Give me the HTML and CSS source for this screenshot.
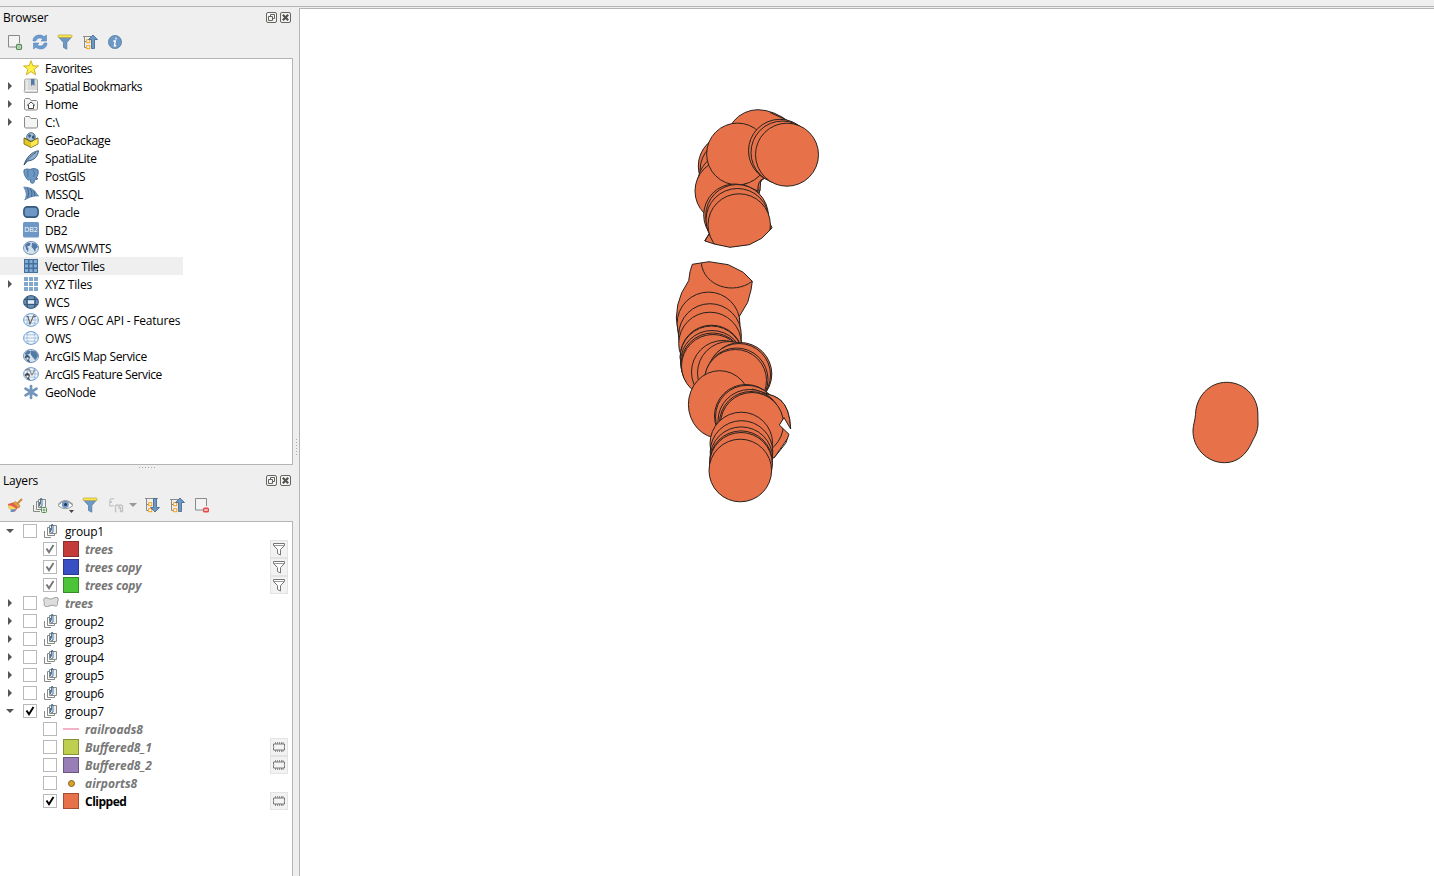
FILE: index.html
```html
<!DOCTYPE html>
<html lang="en">
<head>
<meta charset="utf-8">
<title>Map project</title>
<link rel="stylesheet" href="styles.css">
</head>
<body>
<svg class="defs" aria-hidden="true">
  <symbol id="float" viewBox="0 0 11 11"><rect x=".5" y=".5" width="10" height="10" rx="1.500" fill="#f4f4f4" stroke="#66645f"/><path d="M4.500 4V2.500h4v4H7M2.500 4.500h4v4h-4z" fill="none" stroke="#66645f"/></symbol>
  <symbol id="close" viewBox="0 0 11 11"><rect x=".5" y=".5" width="10" height="10" rx="1.500" fill="#f4f4f4" stroke="#66645f"/><path d="M2.800 2.800l5.400 5.400M8.200 2.800L2.800 8.200" stroke="#55534f" stroke-width="2.200"/></symbol>
  <symbol id="add" viewBox="0 0 16 16"><path d="M10 13H1.500V1.500h11V9" fill="#f3f3f3" stroke="#888a85"/><rect x="9.500" y="10.500" width="5" height="5" rx="1.500" fill="#e6f4e6" stroke="#5a8c5a" stroke-width="1.300"/><path d="M12 11.500v3M10.500 13h3" stroke="#8fb98f"/></symbol>
  <symbol id="refresh" viewBox="0 0 16 16"><path d="M1 7C1 3 4 1 7.500 1c2 0 3.500.7 4.500 1.700L14.500 1v6H9l1.700-1.900C8.500 3.300 5 3.500 3.800 7zM15 9c0 4-3 6-6.500 6-2 0-3.500-.7-4.500-1.700L1.500 15V9H7l-1.700 1.900c2.200 1.800 5.700 1.600 6.900-1.900z" fill="#6b9bd0" stroke="#4d7cb0" stroke-width=".5"/></symbol>
  <symbol id="filter" viewBox="0 0 16 16"><path d="M1.500 3h13L9.800 8.500v6.700L6.500 13.500v-5z" fill="#6d97c4" stroke="#587fa8" stroke-width=".8"/><rect x="1" y="1" width="14" height="2.500" rx="1" fill="#fce94f" stroke="#b5a33c" stroke-width=".7"/></symbol>
  <symbol id="collapse" viewBox="0 0 16 16"><path d="M1 2.500h8M2.500 2v11.500H5M2.500 7.500H5" fill="none" stroke="#888a85"/><rect x="4.700" y="5.700" width="3" height="3" fill="#fff" stroke="#f5a01c"/><rect x="4.700" y="11.700" width="3" height="3" fill="#fff" stroke="#f5a01c"/><path d="M11 1l4.500 4.500h-3v9h-3v-9h-3z" fill="#6d97c4" stroke="#3e648c" stroke-width=".8"/></symbol>
  <symbol id="expand" viewBox="0 0 16 16"><path d="M1 1.500h13M2.500 2v11.500H5M2.500 7.500H5" fill="none" stroke="#888a85"/><rect x="4.700" y="5.700" width="3" height="3" fill="#fff" stroke="#f5a01c"/><rect x="4.700" y="11.700" width="3" height="3" fill="#fff" stroke="#f5a01c"/><path d="M11 15l4.500-4.500h-3v-9h-3v9h-3z" fill="#6d97c4" stroke="#3e648c" stroke-width=".8"/></symbol>
  <symbol id="info" viewBox="0 0 16 16"><circle cx="8" cy="8" r="6.600" fill="#6d97c4" stroke="#527aa5" stroke-width=".7"/><path d="M9.200 3.600l-.3 1.700M6.300 7h2l-.9 4.700h1.800" fill="none" stroke="#fff" stroke-width="1.400"/></symbol>
  <symbol id="star" viewBox="0 0 16 16"><path d="M8 .7l1.900 5.100 5.600.1-4.400 3.400 1.600 5.500L8 11.600l-4.700 3.200 1.600-5.500L.5 5.900l5.600-.1z" fill="#fdf14c" stroke="#c4a000" stroke-width=".8"/></symbol>
  <symbol id="bookmark" viewBox="0 0 16 16"><path d="M3 1h10.500l1 1v12.500H2.500C1 14.500 1 13 1.500 12V2.500Q1.500 1 3 1z" fill="#d9d9d9" stroke="#aaa"/><path d="M4 1.500v10.500M2 12.500h12" stroke="#f6f6f6"/><path d="M8 1h3.500v7L9.800 6.500 8 8z" fill="#527aa5"/></symbol>
  <symbol id="folder" viewBox="0 0 16 16"><path d="M1.500 13V3.500l1-1h4l1.500 2h5.500l1 1V13l-1 1h-11z" fill="#f4f4f4" stroke="#888a85"/></symbol>
  <symbol id="home" viewBox="0 0 16 16"><use href="#folder"/><path d="M4 9.500L8 6l4 3.500M5.500 9v3.500h5V9" fill="#fff" stroke="#333" stroke-width=".9"/></symbol>
  <symbol id="earth" viewBox="0 0 16 16"><ellipse cx="8" cy="8" rx="7.500" ry="6.500" fill="#d4e1ee" stroke="#6d91b5"/><path d="M2 5l3-2.500 3 .8L6.500 6 4 6.500l1.500 2L5 12 3 9zM9 3l4 .5L15 7l-2 1.500-1 3.500-2-3.500L8.500 7z" fill="#527aa5"/></symbol>
  <symbol id="gpkg" viewBox="0 0 16 16"><path d="M1 6l7 3 7-3v6l-7 3.500L1 12z" fill="#e5c723" stroke="#6b5d14" stroke-width=".8"/><path d="M8 9.500l6.500-3v5.300L8 15z" fill="#fce94f"/><circle cx="8" cy="5" r="4.300" fill="#a9c0d8" stroke="#2f5375" stroke-width=".8"/><path d="M5 3l2-.8L8.500 4 6 6zM9 4l2.500-1v4L9 6.500z" fill="#355d84"/><path d="M1 6l7 3.500L15 6" fill="none" stroke="#6b5d14" stroke-width=".8"/></symbol>
  <symbol id="feather" viewBox="0 0 16 16"><path d="M1 15C3 8 8 2 15.500.7 15 6 11.500 10.500 4.500 11z" fill="#8eafd0" stroke="#35536f" stroke-width=".9"/><path d="M1.200 15C4 9.500 8.500 5 13 2.500" fill="none" stroke="#35536f" stroke-width=".8"/></symbol>
  <symbol id="elephant" viewBox="0 0 16 16"><path d="M1 2c2-1.500 4-1 6-.5C9 .2 13 .3 15 2c1 3-.5 6-2 8.300l2 .2c-1 1.400-2.500 1.200-3.500 1-.2 2 0 3.500-1.800 3.800-2.200.3-2.200-1.500-2.200-4-1.200 1-2.500 1.200-3.500-.2C2 8.500.3 5 1 2z" fill="#6d97c4" stroke="#446b91" stroke-width=".9"/><path d="M5.500 2C4 4 5 6.500 5 9M10 2c2 2 1.500 5 .5 7" fill="none" stroke="#446b91" stroke-width=".8"/></symbol>
  <symbol id="mssql" viewBox="0 0 16 16"><path d="M.7 1c4 .1 8.500 1.300 11 4 1.500 1.700 2.500 4 4 5-4.500-.5-9 .7-14 4 2-3.500 2.300-7.500-1-13z" fill="#6d97c4" stroke="#527aa5" stroke-width=".7"/><path d="M4 1.500c2 3 2 7 .5 10.500M7 2.200c2 3 2.300 5.500 1.500 8.600M10 4c1.500 2 2 4 1.800 6" fill="none" stroke="#35536f" stroke-width=".8"/></symbol>
  <symbol id="oracle" viewBox="0 0 16 16"><rect x=".9" y="2.900" width="14.200" height="10.200" rx="3.500" fill="#6d97c4" stroke="#35587b" stroke-width="1.600"/></symbol>
  <symbol id="db2" viewBox="0 0 16 16"><rect width="16" height="15.500" rx="1.500" fill="#6d97c4"/><text x="8" y="10" text-anchor="middle" class="db2-text">DB2</text></symbol>
  <symbol id="grid" viewBox="0 0 16 16"><rect x="1" y="1" width="14" height="14" fill="#45709b"/><path d="M2 2h3v3H2zM6.500 2h3v3h-3zM11 2h3v3h-3zM2 6.500h3v3H2zM6.500 6.500h3v3h-3zM11 6.500h3v3h-3zM2 11h3v3H2zM6.500 11h3v3h-3zM11 11h3v3h-3z" fill="#83acd6"/></symbol>
  <symbol id="xyz" viewBox="0 0 16 16"><path d="M1 1h4v4H1zM6 1h4v4H6zM11 1h4v4h-4zM1 6h4v4H1zM6 6h4v4H6zM11 6h4v4h-4zM1 11h4v4H1zM6 11h4v4H6zM11 11h4v4h-4z" fill="#83a8ce"/></symbol>
  <symbol id="wcs" viewBox="0 0 16 16"><ellipse cx="8" cy="8" rx="7.400" ry="6.400" fill="#6d91b5" stroke="#35587b"/><path d="M1 5.500h14M1 10.500h14M4.800 2.500c-1.500 4-1.500 7 0 11M11.200 2.500c1.500 4 1.500 7 0 11" fill="none" stroke="#35587b" stroke-width="1.200"/><path d="M5 6.300h6v3.400H5z" fill="#e3edf7"/></symbol>
  <symbol id="ows" viewBox="0 0 16 16"><ellipse cx="8" cy="8" rx="7.400" ry="6.400" fill="#f3f7fb" stroke="#6b9bd0"/><path d="M1 8h14M2.500 4.800h11M2.500 11.200h11M5.800 2c-2.400 4-2.400 8 0 12M10.200 2c2.400 4 2.400 8 0 12" fill="none" stroke="#93b6da" stroke-width=".8"/></symbol>
  <symbol id="wfs" viewBox="0 0 16 16"><use href="#ows"/><path d="M3.500 4.500H5L7 12l3.500-8 2.500.5" fill="none" stroke="#666" stroke-width="1.200"/></symbol>
  <symbol id="arcmap" viewBox="0 0 16 16"><use href="#earth"/><path d="M8 2.500l5 1.500 2 4-2.500 4-3-3-2-3z" fill="#527aa5"/><path d="M1.500 9l3-2.500L7 9l-1 3 1.500 2.500-3-1.500z" fill="#35536f"/><path d="M3.500 9.500h2v2h-2z" fill="#fff"/></symbol>
  <symbol id="arcfeat" viewBox="0 0 16 16"><use href="#ows"/><path d="M2 4l4-1 3 6 3-5.500" fill="none" stroke="#888" stroke-width="1.200"/><path d="M1.500 9l3-2.500L7 9l-1 3 1.500 2.500-3-1.500z" fill="#444"/><path d="M3.500 9.500h2v2h-2z" fill="#fff"/></symbol>
  <symbol id="geonode" viewBox="0 0 16 16"><path d="M8 8V2M8 8v6M8 8L2.500 4.700M8 8l5.500 3.300M8 8l5.500-3.300M8 8l-5.500 3.300" stroke="#7296bb" stroke-width="2.700" stroke-linecap="round"/></symbol>
  <symbol id="brush" viewBox="0 0 16 16"><path d="M1 7l5-1.500 5 5-3 4-4 .3C5 13 2 12 1.500 10.500z" fill="#e45a4c"/><path d="M1 8.500c3-.5 6 1 8 3l-2 3-3 .3C5 13 2 12 1.500 10.500z" fill="#f5d75e"/><path d="M4 12.500l5-.5-2 2.800-3.500.2z" fill="#5b8fcc"/><path d="M6 6l6 5 1-2.500L8.500 4.500z" fill="#e5a13b" stroke="#a26a2b" stroke-width=".5"/><path d="M10 7l5-5" stroke="#c98b39" stroke-width="2"/></symbol>
  <symbol id="group" viewBox="0 0 16 16"><path d="M1.500 8v6.500H8" fill="none" stroke="#888a85"/><path d="M6 4.500H4.500v8h7V11" fill="none" stroke="#888a85"/><path d="M6.500 2.500h7v8h-7z" fill="#eef1f3" stroke="#888a85"/><path d="M7.500 5v4q1.200 1.500 2.500 0V2Q9 0 8.500 2v5.500" fill="none" stroke="#3e6890" stroke-width=".9"/></symbol>
  <symbol id="groupadd" viewBox="0 0 16 16"><use href="#group"/><rect x="9.500" y="10.500" width="5" height="5" rx="1" fill="#e6f4e6" stroke="#5a8c5a"/><path d="M12 11.500v3M10.500 13h3" stroke="#5a8c5a" stroke-width=".8"/></symbol>
  <symbol id="eye" viewBox="0 0 18 16"><path d="M1 8.500Q8 0 16 8.500 8.500 15 1 8.500z" fill="#fff" stroke="#999"/><path d="M1 7.500Q8-.5 16 7.500" fill="none" stroke="#888"/><circle cx="8.300" cy="7.500" r="3.500" fill="#6d97c4"/><circle cx="8.500" cy="7.500" r="1.500" fill="#1f3750"/><path d="M12 13h5l-2.500 3z" fill="#444"/></symbol>
  <symbol id="expr" viewBox="0 0 20 16"><g fill="none" stroke="#c2c2c2" stroke-width="1.300"><path d="M5 2C1 .5-1 5 3 5-1.500 5-1 10.500 5 8.500M7.500 14.500H6.500V9q1.500-2 3.500 0v3M10 12V9q1.500-2 3.500 0v5.500h-2V10"/></g></symbol>
  <symbol id="remove" viewBox="0 0 16 16"><path d="M9 13H1.500V1.500h11V9" fill="#f3f3f3" stroke="#888a85"/><rect x="9" y="10.500" width="6" height="5" rx="1.500" fill="#e84848"/><path d="M10.200 13h3.600" stroke="#fff" stroke-width="1.200"/></symbol>
  <symbol id="poly" viewBox="0 0 16 16"><path d="M1 3.500c3-2 5 1 7 .5s5-2.500 7-1c1 2-1 3.500-.5 5.500S13 12 11 10.500s-6 2-8.500 1S2 8 1 6.500s0-2 0-3z" fill="#ddd" stroke="#999"/></symbol>
  <symbol id="tick" viewBox="0 0 14 14"><path d="M3.500 6.500L6 10.300 10.500 3" fill="none" stroke="currentColor" stroke-width="1.900"/></symbol>
  <symbol id="funnel" viewBox="0 0 16 16"><path d="M2.500 2.500h11v2L9.500 8.500v5.500l-3-1.500v-4l-4-4z" fill="#fff" stroke="#777"/><path d="M3 4.500h10" stroke="#999"/></symbol>
  <symbol id="chip" viewBox="0 0 16 16"><path d="M4.500 3v10M6.500 3v10M8.500 3v10M10.500 3v10M12 3v10" stroke="#888" stroke-width=".9"/><path d="M2.500 5h11v2.300q-1 .7 0 1.400V11h-11V8.700q1-.7 0-1.400z" fill="#f4f4f4" stroke="#777"/></symbol>
</svg>
<div class="topbar"></div>
<main class="app">
  <aside class="sidebar">
    <section class="dock browser">
      <header class="title"><span>Browser</span><svg><use href="#float"/></svg><svg><use href="#close"/></svg></header>
      <div class="tools"><svg><use href="#add"/></svg><svg><use href="#refresh"/></svg><svg><use href="#filter"/></svg><svg><use href="#collapse"/></svg><svg><use href="#info"/></svg></div>
      <ul class="tree">
        <li><i></i><svg><use href="#star"/></svg><span class="tight">Favorites</span></li>
        <li><i class="shut"></i><svg><use href="#bookmark"/></svg><span class="tight">Spatial Bookmarks</span></li>
        <li><i class="shut"></i><svg><use href="#home"/></svg><span>Home</span></li>
        <li><i class="shut"></i><svg><use href="#folder"/></svg><span>C:\</span></li>
        <li><i></i><svg><use href="#gpkg"/></svg><span class="snug">GeoPackage</span></li>
        <li><i></i><svg><use href="#feather"/></svg><span class="snug">SpatiaLite</span></li>
        <li><i></i><svg><use href="#elephant"/></svg><span class="tight">PostGIS</span></li>
        <li><i></i><svg><use href="#mssql"/></svg><span class="snug">MSSQL</span></li>
        <li><i></i><svg><use href="#oracle"/></svg><span class="snug">Oracle</span></li>
        <li><i></i><svg><use href="#db2"/></svg><span class="tight">DB2</span></li>
        <li><i></i><svg><use href="#earth"/></svg><span>WMS/WMTS</span></li>
        <li class="hover"><i></i><svg><use href="#grid"/></svg><span class="tight">Vector Tiles</span></li>
        <li><i class="shut"></i><svg><use href="#xyz"/></svg><span>XYZ Tiles</span></li>
        <li><i></i><svg><use href="#wcs"/></svg><span>WCS</span></li>
        <li><i></i><svg><use href="#wfs"/></svg><span>WFS / OGC API - Features</span></li>
        <li><i></i><svg><use href="#ows"/></svg><span>OWS</span></li>
        <li><i></i><svg><use href="#arcmap"/></svg><span class="snug">ArcGIS Map Service</span></li>
        <li><i></i><svg><use href="#arcfeat"/></svg><span class="tight">ArcGIS Feature Service</span></li>
        <li><i></i><svg><use href="#geonode"/></svg><span class="snug">GeoNode</span></li>
      </ul>
    </section>
    <div class="hgrip"><b></b></div>
    <section class="dock layers">
      <header class="title"><span>Layers</span><svg><use href="#float"/></svg><svg><use href="#close"/></svg></header>
      <div class="tools"><svg><use href="#brush"/></svg><svg><use href="#groupadd"/></svg><svg class="eye"><use href="#eye"/></svg><svg><use href="#filter"/></svg><svg class="expr"><use href="#expr"/></svg><i class="drop"></i><svg><use href="#expand"/></svg><svg><use href="#collapse"/></svg><svg><use href="#remove"/></svg></div>
      <ul class="tree">
        <li><i class="open"></i><b class="box"></b><svg><use href="#group"/></svg><span>group1</span></li>
        <li class="child off"><b class="box"><svg><use href="#tick"/></svg></b><em class="swatch red"></em><span>trees</span><svg class="badge"><use href="#funnel"/></svg></li>
        <li class="child off"><b class="box"><svg><use href="#tick"/></svg></b><em class="swatch blue"></em><span>trees copy</span><svg class="badge"><use href="#funnel"/></svg></li>
        <li class="child off"><b class="box"><svg><use href="#tick"/></svg></b><em class="swatch green"></em><span>trees copy</span><svg class="badge"><use href="#funnel"/></svg></li>
        <li class="off"><i class="shut"></i><b class="box"></b><svg><use href="#poly"/></svg><span>trees</span></li>
        <li><i class="shut"></i><b class="box"></b><svg><use href="#group"/></svg><span>group2</span></li>
        <li><i class="shut"></i><b class="box"></b><svg><use href="#group"/></svg><span>group3</span></li>
        <li><i class="shut"></i><b class="box"></b><svg><use href="#group"/></svg><span>group4</span></li>
        <li><i class="shut"></i><b class="box"></b><svg><use href="#group"/></svg><span>group5</span></li>
        <li><i class="shut"></i><b class="box"></b><svg><use href="#group"/></svg><span>group6</span></li>
        <li><i class="open"></i><b class="box"><svg><use href="#tick"/></svg></b><svg><use href="#group"/></svg><span>group7</span></li>
        <li class="child off loose"><b class="box"></b><em class="rail"></em><span>railroads8</span></li>
        <li class="child off loose"><b class="box"></b><em class="swatch lime"></em><span>Buffered8_1</span><svg class="badge"><use href="#chip"/></svg></li>
        <li class="child off loose"><b class="box"></b><em class="swatch purple"></em><span>Buffered8_2</span><svg class="badge"><use href="#chip"/></svg></li>
        <li class="child off loose"><b class="box"></b><em class="dot"></em><span>airports8</span></li>
        <li class="child on"><b class="box"><svg><use href="#tick"/></svg></b><em class="swatch orange"></em><span>Clipped</span><svg class="badge"><use href="#chip"/></svg></li>
      </ul>
    </section>
  </aside>
  <div class="vgrip"><b></b></div>
  <div class="map">
    <svg class="canvas" viewBox="300 9 1134 867">
      <defs>
        <clipPath id="north"><path d="M690 100H830V200H775L772.300 227.700 761.700 238.300 749.300 244.700 730 247.300 714.300 244 705 241 690 235z"/></clipPath>
        <clipPath id="notch"><path d="M660 340H762L770 394.500Q783 397 787.700 411 790.500 419 790.700 429L784 417.700 779.300 425 789 434.300 785.700 443.300 774 458V510H660z"/></clipPath>
      </defs>
      <g class="shape">
        <g clip-path="url(#north)">
          <path d="M727 147A31.500 31.500 0 0 1 758 109.700Q774 110 790 122.500L785 140H750z"/>
          <path class="line" d="M770 112.500L793 123"/>
          <path d="M743 184L765 178Q758 181 760 190L756 203H730z"/>
          <circle cx="729.700" cy="166" r="31.400"/><circle cx="731.500" cy="170" r="31.400"/><circle cx="729" cy="184" r="31.500"/>
          <circle cx="726.500" cy="191" r="31.500"/>
          <path d="M743 184Q753 181 759 175L765 178Q757 180 758 191L751 188z"/>
          <circle cx="737.500" cy="154" r="30.900"/>
          <circle cx="780" cy="150.800" r="31.500"/><circle cx="782.500" cy="152.500" r="31.500"/>
          <circle cx="787" cy="154.700" r="31.500"/>
          <path d="M709 234L704.500 241 730 252 772.300 228 769 222z"/>
          <circle cx="734.700" cy="215" r="31"/><circle cx="737" cy="215.800" r="31.300"/><circle cx="737.500" cy="220" r="31.500"/>
          <circle cx="739.200" cy="225" r="31.200"/>
        </g>
        <path class="line" d="M772.300 227.700L761.700 238.300 749.300 244.700 730 247.300 714.300 244 705 241 709 234"/>
        <path d="M692.300 264.300L709 261.700 728.300 264.700 743.300 272.300 752.300 281.300 751 290 747.700 302.300 739 317 742 350 700 385 684 374 680 347 676.300 318 677.700 305 681.700 292.700 688.700 280.700 690 271.700z"/>
        <path class="line" d="M701.300 263.300C704 286 733 295.500 752.300 281.300"/>
        <circle cx="708.500" cy="323.500" r="31.400"/><circle cx="710" cy="335" r="31.300"/><circle cx="710" cy="343.500" r="31.300"/>
        <circle cx="711.500" cy="356.500" r="31.300"/><circle cx="711.500" cy="357.300" r="31.300"/><circle cx="712" cy="362" r="31.500"/><circle cx="712.500" cy="364.500" r="31.500"/><circle cx="713" cy="366" r="31.500"/>
        <circle cx="723" cy="372" r="31.500"/><circle cx="729" cy="373" r="31.500"/>
        <circle cx="740.300" cy="374" r="31.500"/><circle cx="739" cy="375" r="31.500"/><circle cx="736.500" cy="379.500" r="31.500"/><circle cx="735.500" cy="380.500" r="31"/>
        <ellipse cx="719.700" cy="404.500" rx="31.300" ry="33.800"/>
        <g clip-path="url(#notch)">
          <circle cx="746" cy="416" r="31.500"/><circle cx="747" cy="416.800" r="31.500"/><path d="M752 389L770 394.500Q783 397 787.700 411 790.500 419 790.700 429V434L774 458 750 450z"/>
          <circle cx="749.500" cy="421" r="31.500"/><circle cx="751" cy="423" r="31.500"/><circle cx="752" cy="424" r="31.500"/>
        </g>
        <path class="line" d="M766 393.500Q783 397 787.700 411 790.500 419 790.700 429L784 417.700 779.300 425 789 434.300 785.700 443.300 774 458"/>
        <circle cx="741.300" cy="443.500" r="31.300"/><circle cx="741.500" cy="452" r="31.300"/><circle cx="741.300" cy="458.200" r="31.300"/><circle cx="741" cy="462.200" r="31.300"/><circle cx="741" cy="463.800" r="31.300"/>
        <circle cx="740.300" cy="470.500" r="31.300"/>
        <path d="M1226.500 382.300C1244 382.300 1257 396 1257.800 412L1258 425C1257 435 1253.500 438 1251.500 443C1246 455 1237 462.700 1224.500 462.700C1207 462.700 1192.500 448 1193 430C1193.200 425 1195 421 1195.500 414.500C1196 397 1209 382.300 1226.500 382.300z"/>
      </g>
    </svg>
  </div>
</main>
</body>
</html>
```

FILE: styles.css
```css
* { box-sizing: border-box; }
body { margin: 0; height: 876px; overflow: hidden; display: flex; flex-direction: column; background: #efefef; color: #000; font: 12px/18px "Open Sans", "Noto Sans", sans-serif; letter-spacing: -0.2px; }
svg { display: block; flex: none; width: 16px; height: 16px; }
.defs { display: none; }
.db2-text { font: 7px "Open Sans", sans-serif; fill: #fff; letter-spacing: 0; }
.topbar { height: 7px; flex: none; border-bottom: 1px solid #b4b4b4; }
.app { flex: 1; display: flex; min-height: 0; }
.sidebar { width: 293px; display: flex; flex-direction: column; }
.dock { display: flex; flex-direction: column; }
.browser { height: 458px; }
.layers { flex: 1; }
.title { height: 21px; display: flex; align-items: center; gap: 3px; padding: 0 2px 0 3px; }
.title span { flex: 1; padding-top: 1px; }
.title svg { width: 11px; height: 11px; }
.tools { height: 30px; display: flex; align-items: center; gap: 9px; padding: 0 0 2px 7px; }
.tools .eye { width: 18px; margin-right: -2px; }
.tools .expr { width: 20px; margin-left: 2px; }
.drop { border: 4px solid transparent; border-top-color: #999; border-bottom: 0; margin: 0 -2px 0 -9px; }
.tree { flex: 1; list-style: none; margin: 0; padding: 0; background: #fff; border: 1px solid #b4b4b4; border-left: 0; }
.layers .title { height: 20px; }
.layers .tools { height: 31px; }
.layers .tree { border-bottom: 0; }
.tree li { height: 18px; display: flex; align-items: center; padding-left: 5px; }
.tree li > svg { margin-right: 6px; }
.tree span { line-height: 16px; padding-top: 2px; white-space: nowrap; }
.browser .hover { width: 183px; background: #efefef; }
.snug { letter-spacing: -0.32px; }
.tight { letter-spacing: -0.4px; }
.tree i { width: 10px; height: 10px; margin-right: 8px; flex: none; display: flex; align-items: center; justify-content: center; }
.shut::before { content: ""; border: 4px solid transparent; border-left-color: #555; border-right: 0; }
.open::before { content: ""; border: 4px solid transparent; border-top-color: #555; border-bottom: 0; }
.box { width: 14px; height: 14px; flex: none; border: 1px solid #b9b9b9; background: #fff; margin-right: 6px; }
.box svg { width: 14px; height: 14px; margin: -1px; }
.tree .child { padding-left: 43px; padding-right: 5px; }
.off span { color: #777; font-weight: 700; font-style: italic; }
.loose span { letter-spacing: 0; }
.off .box { color: #777; }
.on span { font-weight: 700; letter-spacing: -0.5px; }
.child span { flex: 1; }
.swatch { width: 16px; height: 16px; border: 1px solid; margin-right: 6px; flex: none; }
.red { background: #c43c39; border-color: #89302d; }
.blue { background: #3850c4; border-color: #283989; }
.green { background: #4bc437; border-color: #358927; }
.lime { background: #becf50; border-color: #859138; }
.purple { background: #987db7; border-color: #6a5780; }
.orange { background: #e77148; border-color: #a14f32; }
.rail { width: 16px; height: 2px; background: #f3b2c8; margin-right: 6px; }
.dot { width: 7px; height: 7px; border: 1px solid #806320; border-radius: 50%; background: #dba02b; margin: 0 10px 0 5px; }
.tree .badge { background: #f2f2f2; outline: 1px solid #e3e3e3; margin: 0; }
.hgrip { height: 5px; display: flex; justify-content: center; align-items: center; }
.hgrip b { width: 16px; height: 1px; background: repeating-linear-gradient(90deg, #aaa 0 1px, transparent 1px 3px); }
.vgrip { width: 6px; display: flex; justify-content: center; padding-top: 432px; }
.vgrip b { width: 1px; height: 16px; background: repeating-linear-gradient(#aaa 0 1px, transparent 1px 3px); }
.map { flex: 1; margin-top: 1px; border: 1px solid #b4b4b4; border-width: 1px 0 0 1px; background: #fff; }
.canvas { width: 1134px; height: 867px; }
.shape { fill: #e77148; stroke: #28221f; stroke-width: 1; stroke-linejoin: round; }
.shape .line { fill: none; }
```
